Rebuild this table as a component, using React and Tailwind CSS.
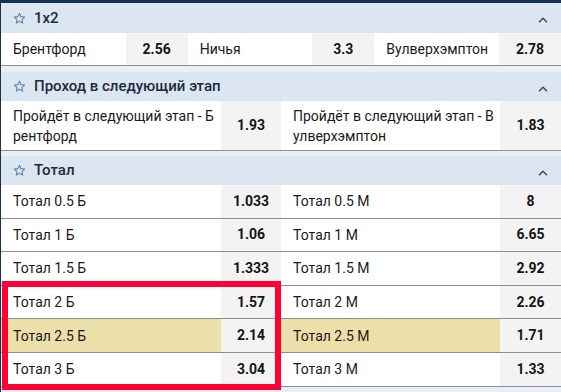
import React from "react";

function Star() {
  return (
    <svg width="13" height="13" viewBox="0 0 24 24" fill="none" stroke="#5f83ab" strokeWidth="2" strokeLinejoin="round">
      <polygon points="12,2.5 14.9,8.6 21.5,9.4 16.6,13.9 17.9,20.5 12,17.2 6.1,20.5 7.4,13.9 2.5,9.4 9.1,8.6" />
    </svg>
  );
}

function Chevron() {
  return (
    <svg width="10" height="6" viewBox="0 0 10 6" fill="none" stroke="#33465e" strokeWidth="1.4">
      <polyline points="1,5.2 5,1.2 9,5.2" />
    </svg>
  );
}

function Header({ title, h }) {
  return (
    <div className={`flex items-center bg-[#dbe6f0] pl-[12px] pr-[13px] ${h}`}>
      <Star />
      <span className="ml-[8px] text-[15px] font-medium text-[#1b2a43]">{title}</span>
      <div className="ml-auto mt-[4px] flex">
        <Chevron />
      </div>
    </div>
  );
}

function Cell({ name, odd, hl, oddW = "w-[60px]" }) {
  return (
    <div className="flex flex-1 h-full">
      <div className={`flex flex-1 items-center pl-[12px] text-[14px] leading-[20px] text-[#1a1a1a] ${hl ? "bg-[#ebdfaa]" : "bg-white"}`}>
        {name}
      </div>
      <div className={`flex ${oddW} items-center justify-center bg-[#f3f3f3] text-[14px] font-bold text-[#151515]`}>
        {odd}
      </div>
    </div>
  );
}

const totals = [
  ["Тотал 0.5 Б", "1.033", "Тотал 0.5 М", "8", false],
  ["Тотал 1 Б", "1.06", "Тотал 1 М", "6.65", false],
  ["Тотал 1.5 Б", "1.333", "Тотал 1.5 М", "2.92", false],
  ["Тотал 2 Б", "1.57", "Тотал 2 М", "2.26", false],
  ["Тотал 2.5 Б", "2.14", "Тотал 2.5 М", "1.71", true],
  ["Тотал 3 Б", "3.04", "Тотал 3 М", "1.33", false],
];

export default function App() {
  return (
    <div className="relative w-[561px] h-[392px] overflow-hidden bg-[#e9eff5] font-['Roboto','Noto_Sans',sans-serif]">
      <div className="h-[3px] bg-[#16314f]" />
      <div className="border-l border-[#16314f] h-[389px] flex flex-col">
        <Header title="1x2" h="h-[30px]" />
        <div className="flex h-[33px] border-b border-[#8e8e8e]">
          <Cell name="Брентфорд" odd="2.56" oddW="w-[62px]" />
          <Cell name="Ничья" odd="3.3" oddW="w-[62px]" />
          <Cell name="Вулверхэмптон" odd="2.78" oddW="w-[62px]" />
        </div>
        <div className="h-[6px]" />
        <Header title="Проход в следующий этап" h="h-[29px]" />
        <div className="flex h-[50px] border-b border-[#8e8e8e]">
          <Cell
            name={<span>Пройдёт в следующий этап - Б<br />рентфорд</span>}
            odd="1.93"
          />
          <Cell
            name={<span>Пройдёт в следующий этап - В<br />улверхэмптон</span>}
            odd="1.83"
            oddW="w-[61px]"
          />
        </div>
        <div className="h-[5px]" />
        <Header title="Тотал" h="h-[29px]" />
        {totals.map((t, i) => (
          <div key={i} className="flex h-[33.6px] shrink-0 border-b border-[#8e8e8e]">
            <Cell name={t[0]} odd={t[1]} hl={t[4]} />
            <Cell name={t[2]} odd={t[3]} hl={t[4]} oddW="w-[61px]" />
          </div>
        ))}
      </div>
      <div className="absolute left-[2px] top-[281px] w-[279px] h-[109px] border-[6px] border-[#ff0036]" />
    </div>
  );
}
